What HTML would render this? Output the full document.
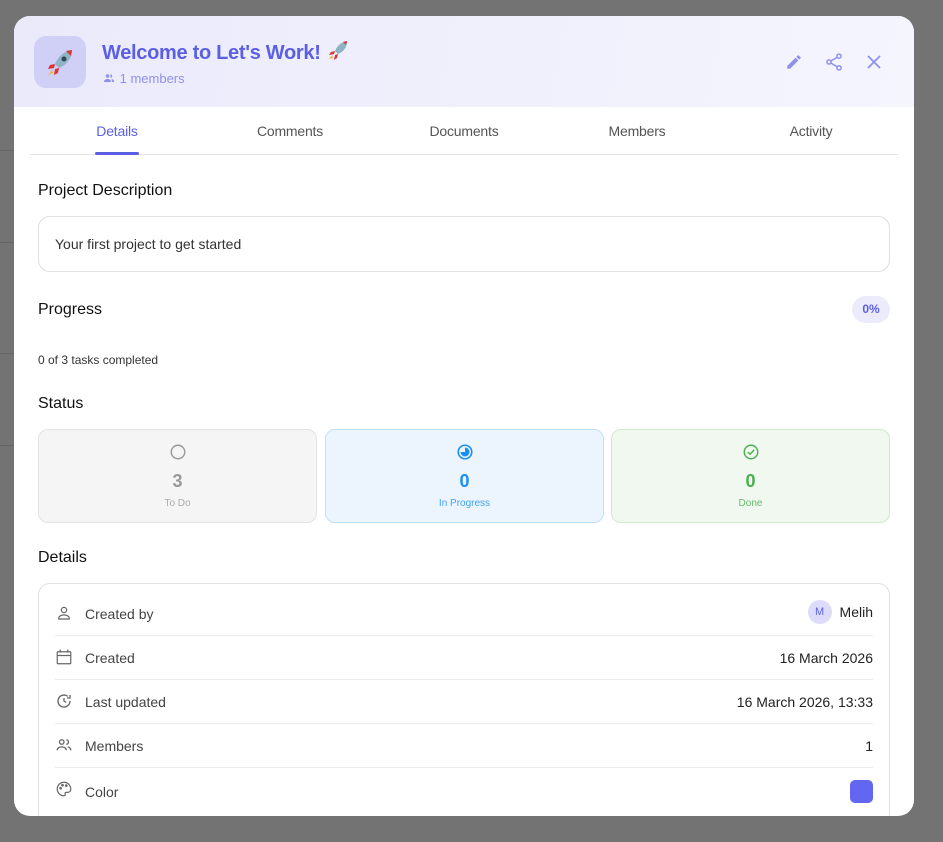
<!DOCTYPE html>
<html><head><meta charset="utf-8"><style>
*{box-sizing:border-box;margin:0;padding:0}
body{width:943px;height:842px;background:#737373;font-family:"Liberation Sans",sans-serif;position:relative;overflow:hidden;color:#222}
.bgline{position:absolute;left:0;width:14px;height:1px;background:#666}
.modal{position:absolute;left:14px;top:16px;width:900px;height:800px;background:#fff;border-radius:16px;overflow:hidden}
.hdr{height:91px;background:linear-gradient(100deg,#eaeafb,#f5f5fe);position:relative}
.ico{position:absolute;left:20px;top:20px;width:52px;height:52px;border-radius:12px;background:#d0d0f6}
.title{position:absolute;left:88px;top:22px;font-size:20px;font-weight:bold;color:#5b5fe3;letter-spacing:-0.3px}
.mem{position:absolute;left:88px;top:55px;font-size:13px;color:#8f90ea}
.tabs{height:48px;position:relative;margin:0 16px;border-bottom:1px solid #e2e2e2}
.tab{position:absolute;top:16px;font-size:14px;color:#555;transform:translateX(-50%);letter-spacing:-0.2px}
.tab.a{color:#5b5fe3}
.ul{position:absolute;left:65px;top:45px;width:44px;height:3px;background:#5b5fe3;border-radius:2px}
h3{position:absolute;left:24px;font-size:16px;font-weight:normal;color:#111}
.box{position:absolute;left:24px;width:852px;border:1px solid #e0e0e0;border-radius:12px}
.card{position:absolute;top:413px;width:279px;height:94px;border-radius:10px;text-align:center}
.card .n{position:absolute;top:41px;width:100%;font-size:18px;font-weight:bold}
.card .l{position:absolute;top:68px;width:100%;font-size:10px}
.card svg{position:absolute;left:130px;top:13px}
.row{position:absolute;left:16px;width:818px;height:44px;border-bottom:1px solid #ececec;font-size:14px;color:#444}
.row .k{position:absolute;left:30px;top:14px}
.row .v{position:absolute;right:0;top:14px;color:#222}
.row svg{position:absolute;left:0;top:12px}
</style></head><body>
<div class="bgline" style="top:150px"></div><div class="bgline" style="top:242px"></div><div class="bgline" style="top:353px"></div><div class="bgline" style="top:445px"></div>
<div class="modal">
<div class="hdr">
<div class="ico"><svg width="52" height="52" viewBox="0 0 52 52"><path d="M38 14c-8 1-14 7-17 14l4 4c7-3 13-9 13-18z" fill="#8fb4c4"/><path d="M38 14l-6 1 5 5z" fill="#d33"/><circle cx="30" cy="23" r="2.5" fill="#345"/><path d="M21 28l-5 1-2 4 6-1zM25 32l-1 5-4 2 1-6z" fill="#d33"/><path d="M18 34l-4 5 5-2z" fill="#f2b43c"/></svg></div>
<div class="title">Welcome to Let's Work! <svg width="24" height="24" viewBox="0 0 24 24" style="vertical-align:-3px"><path d="M21 3c-6 1-10 5-12 10l3 3c5-2 9-6 9-13z" fill="#8fb4c4"/><path d="M21 3l-4 1 3 3z" fill="#d33"/><path d="M9 13l-4 1-2 3 5-1zM12 16l-1 4-3 2 1-5z" fill="#d33"/><path d="M6 17l-3 4 4-1z" fill="#f2b43c"/></svg></div>
<div class="mem"><svg width="14" height="12" viewBox="0 0 24 24" style="vertical-align:-1px" fill="#8f90ea"><circle cx="9" cy="8" r="3.5"/><path d="M2 19c0-3 4-5 7-5s7 2 7 5v1H2z"/><path d="M15 4.5a3.5 3.5 0 010 7M17 14c3 .5 5 2 5 5v1h-4"/></svg> 1 members</div>
<svg style="position:absolute;left:771px;top:37px" width="18" height="18" viewBox="0 0 24 24" fill="#8f90ea"><path d="M3 17.25V21h3.75L17.8 9.94l-3.75-3.75zM20.7 7.04a1 1 0 000-1.41l-2.34-2.34a1 1 0 00-1.41 0l-1.83 1.83 3.75 3.75z"/></svg>
<svg style="position:absolute;left:810px;top:36px" width="20" height="20" viewBox="0 0 24 24" fill="none" stroke="#8f90ea" stroke-width="1.8"><circle cx="18" cy="5" r="2.5"/><circle cx="6" cy="12" r="2.5"/><circle cx="18" cy="19" r="2.5"/><path d="M8.2 10.8l7.6-4.5M8.2 13.2l7.6 4.5"/></svg>
<svg style="position:absolute;left:851px;top:37px" width="18" height="18" viewBox="0 0 24 24" stroke="#8f90ea" stroke-width="2.4"><path d="M4 4l16 16M20 4L4 20"/></svg>
</div>
<div class="tabs">
<div class="tab a" style="left:87px">Details</div><div class="tab" style="left:260px">Comments</div><div class="tab" style="left:434px">Documents</div><div class="tab" style="left:607px">Members</div><div class="tab" style="left:781px">Activity</div>
<div class="ul"></div></div>
<h3 style="top:166px">Project Description</h3>
<div class="box" style="top:200px;height:56px"><div style="position:absolute;left:16px;top:19px;font-size:14px;color:#333">Your first project to get started</div></div>
<h3 style="top:285px">Progress</h3>
<div style="position:absolute;left:838px;top:280px;width:38px;height:27px;border-radius:14px;background:#ebebfc;color:#5b5fe3;font-size:12px;font-weight:bold;text-align:center;line-height:27px">0%</div>
<div style="position:absolute;left:24px;top:337px;font-size:12px;color:#333">0 of 3 tasks completed</div>
<h3 style="top:379px">Status</h3>
<div class="card" style="left:24px;background:#f5f5f5;border:1px solid #e3e3e3"><svg width="18" height="18" viewBox="0 0 20 20"><circle cx="10" cy="10" r="7.5" fill="none" stroke="#999" stroke-width="1.6"/></svg><div class="n" style="color:#999">3</div><div class="l" style="color:#aaa">To Do</div></div>
<div class="card" style="left:311px;background:#ecf5fe;border:1px solid #bfe0fa"><svg width="18" height="18" viewBox="0 0 20 20"><circle cx="10" cy="10" r="7.5" fill="none" stroke="#1a8ff0" stroke-width="1.8"/><path d="M10 5a5 5 0 11-5 5h5z" fill="#1a8ff0"/></svg><div class="n" style="color:#1a8ff0">0</div><div class="l" style="color:#3fa3f2">In Progress</div></div>
<div class="card" style="left:597px;background:#f0f8f0;border:1px solid #cfe9cf"><svg width="18" height="18" viewBox="0 0 20 20" fill="none" stroke="#4caf50" stroke-width="1.6"><circle cx="10" cy="10" r="7.5"/><path d="M6.5 10l2.5 2.5 4.5-5"/></svg><div class="n" style="color:#4caf50">0</div><div class="l" style="color:#66bb6a">Done</div></div>
<h3 style="top:533px">Details</h3>
<div class="box" style="top:567px;height:250px">
<div class="row" style="top:8px"><svg width="18" height="18" viewBox="0 0 24 24" fill="none" stroke="#666" stroke-width="1.6"><circle cx="12" cy="8" r="3.5"/><path d="M5 19c0-3 4-4.5 7-4.5s7 1.5 7 4.5v1H5z"/></svg><span class="k">Created by</span><span class="v" style="top:8px;display:flex;align-items:center"><span style="display:inline-block;width:24px;height:24px;border-radius:12px;background:#dcdcfa;color:#5b5fe3;font-size:11px;text-align:center;line-height:24px;margin-right:8px">M</span>Melih</span></div>
<div class="row" style="top:52px"><svg width="18" height="18" viewBox="0 0 24 24" fill="none" stroke="#666" stroke-width="1.6"><rect x="3" y="5" width="18" height="16" rx="1"/><path d="M3 10h18M7 2v4M17 2v4"/></svg><span class="k">Created</span><span class="v">16 March 2026</span></div>
<div class="row" style="top:96px"><svg width="18" height="18" viewBox="0 0 24 24" fill="none" stroke="#666" stroke-width="1.8"><path d="M20 12a8 8 0 11-3-6.2M20 4v4h-4M12 8v4l3 2"/></svg><span class="k">Last updated</span><span class="v">16 March 2026, 13:33</span></div>
<div class="row" style="top:140px"><svg width="18" height="18" viewBox="0 0 24 24" fill="none" stroke="#666" stroke-width="1.8"><circle cx="9" cy="8" r="3"/><path d="M3 19c0-3 3-4.5 6-4.5s6 1.5 6 4.5M15 5a3 3 0 010 6M17 14.5c2 .5 4 1.5 4 4.5"/></svg><span class="k">Members</span><span class="v">1</span></div>
<div class="row" style="top:184px;border:none"><svg width="18" height="18" viewBox="0 0 24 24" fill="none" stroke="#666" stroke-width="1.6"><path d="M12 3a9 9 0 000 18c1.5 0 2-1 1.5-2s0-2.5 1.5-2.5H17a4 4 0 004-4C21 7 17 3 12 3z"/><circle cx="7.5" cy="11" r="1"/><circle cx="10" cy="7" r="1"/><circle cx="15" cy="7.5" r="1"/></svg><span class="k" style="top:16px">Color</span><span class="v" style="top:12px;width:23px;height:23px;border-radius:5px;background:#6366f1"></span></div>
</div>
</div>
</body></html>
